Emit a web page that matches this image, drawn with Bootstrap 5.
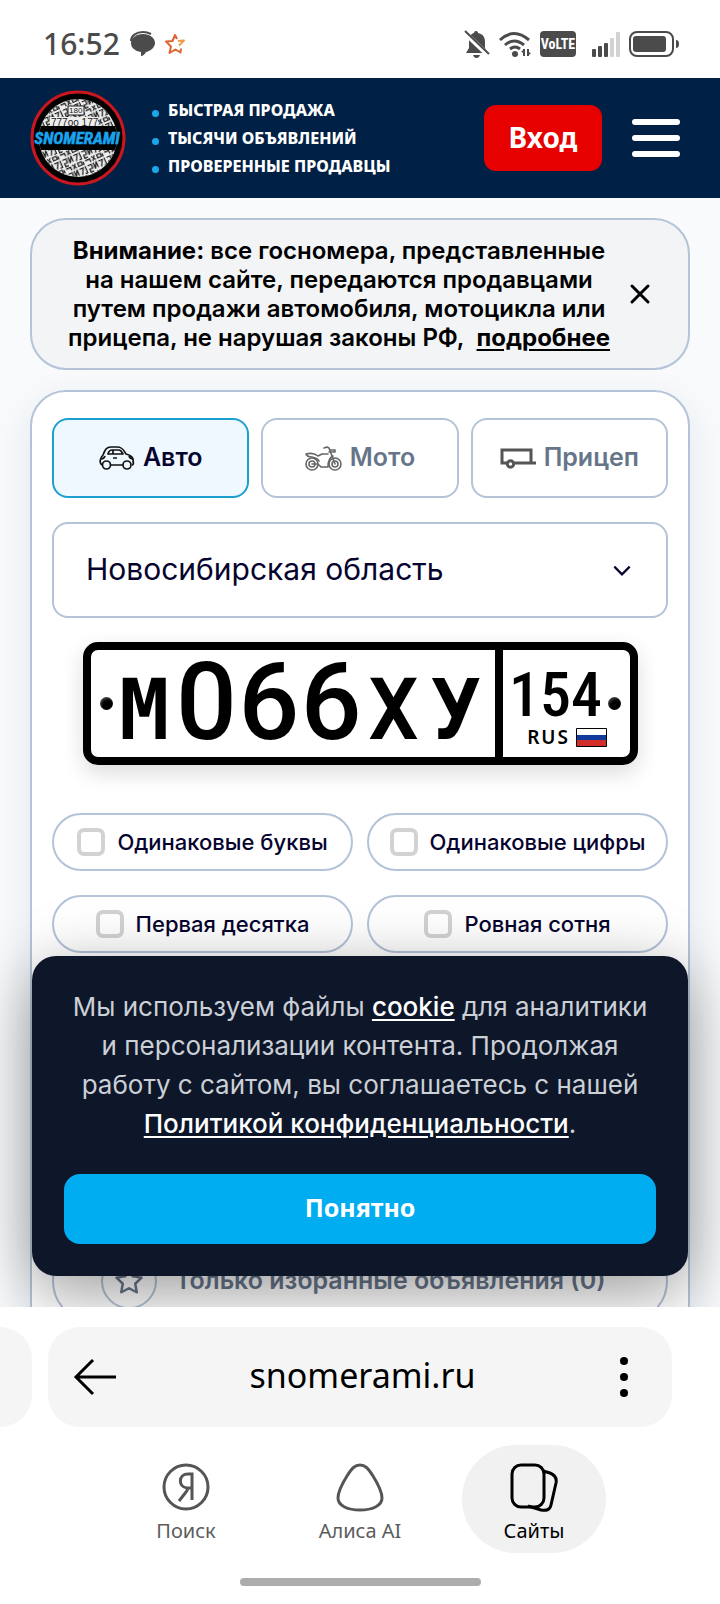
<!DOCTYPE html>
<html lang="ru">
<head>
<meta charset="utf-8">
<meta name="viewport" content="width=device-width, initial-scale=1">
<title>snomerami.ru</title>
<link href="https://cdn.jsdelivr.net/npm/bootstrap@5.3.0/dist/css/bootstrap.min.css" rel="stylesheet">
<style>
  :root { --line: #b4c3d8; --ink: #06042e; --slate: #67758a; }
  body { font-family: Inter, "Noto Sans", sans-serif; background: #fff; color: #000; overflow: hidden; }
  svg { display: block; flex: none; }
  .status-bar { height: 78px; padding: 10px 41px 0 43px; color: #4b4b4b; }
  .clock { font: 500 30px/40px "Noto Sans", sans-serif; }
  .site-head { background: #002145; height: 120px; padding: 0 40px 0 30px; }
  .perks { font: 800 16px/28px "Noto Sans", sans-serif; color: #fff; margin-left: 26px; }
  .perks li { display: flex; align-items: center; gap: 9px; white-space: nowrap; }
  .perks li::before { content: ""; width: 7px; height: 7px; border-radius: 50%; background: #1ba8ea; margin-top: 6px; }
  .btn-login { background: #e60000; color: #fff; font: 700 28px/40px "Noto Sans", sans-serif; width: 118px; height: 66px; padding: 0 0 2px; border: 0; border-radius: 12px; }
  .burger { width: 48px; height: 38px; margin-left: 30px; }
  .burger span { height: 6px; border-radius: 3px; background: #fff; }
  .screen { background: #f8fafc; min-height: 0; }
  .stack { padding: 20px 30px 0; gap: 20px; }
  .notice { background: #f3f4f6; border: 2px solid var(--line); border-radius: 36px; padding: 16px 36px; font-size: 24px; line-height: 29px; font-weight: 600; }
  .notice b { font-weight: 700; }
  .notice a { color: #000; font-weight: 700; text-underline-offset: 3px; }
  .panel { background: #fff; border: 2px solid var(--line); border-radius: 36px; padding: 26px 20px; box-shadow: 0 12px 40px rgba(30,50,80,.09); }
  .tabs-row { gap: 12px; }
  .tab-btn { height: 80px; padding: 0; border: 2px solid var(--line); border-radius: 16px; font-size: 25px; font-weight: 600; color: var(--slate); background: #fff; }
  .tab-btn.active { background: #eff8ff; border-color: #1d9fd0; color: var(--ink); }
  .region { height: 96px; border: 2px solid var(--line); border-radius: 16px; padding: 0 32px 2px; font-size: 30px; color: var(--ink); background-color: #fff;
    background-image: url("data:image/svg+xml,%3Csvg xmlns='http://www.w3.org/2000/svg' viewBox='0 0 16 10' fill='none' stroke='%2306042e' stroke-width='2'%3E%3Cpath d='M1 1.500 8 8.500 15 1.500'/%3E%3C/svg%3E"); background-size: 18px 11px; background-position: right 35px center; }
  .plate { margin: 24px 30px 0 31px; height: 123px; border: 8px solid #000; border-radius: 15px; background: #fff; box-shadow: 0 8px 22px rgba(0,0,0,.14); font-family: Roboto, sans-serif; }
  .plate input { border: 0; padding: 0; background: none; text-align: center; font-weight: 500; color: #000; min-width: 0; outline: 0; height: 107px; }
  .chars { padding: 0 8px 0 22px; }
  .chars input { width: 0; flex: 1; font-size: 107px; }
  .chars .letter { font-family: "DejaVu Sans Mono", monospace; font-weight: 700; font-size: 83px; padding-top: 15px; }
  .plate-code { width: 135px; border-left: 8px solid #000; padding: 12px 5px 6px 6px; }
  .plate .code-box { width: 92px; height: 64px; font-family: "Roboto Condensed", Roboto, sans-serif; font-size: 62px; }
  .rus { font: 600 19px/22px "Noto Sans", sans-serif; letter-spacing: 2px; }
  .rus-row { gap: 6px; padding-right: 18px; }
  .bolt { width: 13px; height: 13px; border-radius: 50%; background: radial-gradient(circle at 60% 65%, #000 40%, #777); }
  .bolt-left { left: 9px; top: 47px; }
  .bolt-right { right: 9px; top: 47px; }
  .flags-grid { display: grid; grid-template-columns: 1fr 1fr; gap: 24px 14px; margin-top: 48px; }
  .pill { border: 2px solid var(--line); border-radius: 29px; height: 58px; font-size: 22px; font-weight: 500; color: var(--ink); gap: 12px; white-space: nowrap; }
  .pill .form-check-input { width: 28px; height: 28px; margin: 0; border: 4px solid #d2d2d2; border-radius: 7px; }
  .fav { margin-top: 286px; height: 84px; border: 2px solid var(--line); border-radius: 42px; font-size: 25px; font-weight: 600; color: var(--slate); background: #fff; padding: 0 0 0 47px; gap: 18px; }
  .fav-star { width: 56px; height: 56px; border: 2px solid var(--line); border-radius: 50%; }
  .cookie { left: 32px; right: 32px; bottom: 31px; background: #0e172a; border-radius: 24px; padding: 31px 32px 32px; color: #cbcfd6; font-size: 26px; line-height: 39px; box-shadow: 0 16px 64px rgba(0,0,0,.4); }
  .cookie a { color: #fff; font-weight: 500; text-underline-offset: 3px; }
  .btn-ok { background: #00adf0; color: #fff; font: 700 25px/36px "Noto Sans", sans-serif; height: 70px; padding: 0 0 4px; border: 0; border-radius: 16px; margin-top: 31px; }
  .browser { background: #fff; padding-top: 20px; font-family: "Noto Sans", sans-serif; }
  .tab-prev { width: 32px; height: 100px; background: #f5f5f5; border-radius: 0 32px 32px 0; }
  .address { height: 100px; background: #f5f5f5; border-radius: 32px; margin: 0 48px 0 16px; padding: 0 40px 0 25px; font-size: 34px; }
  .address span { padding: 0 8px 4px 0; }
  .dock { padding: 18px 114px 0; }
  .dock a { width: 144px; height: 108px; border-radius: 54px; padding-top: 17px; gap: 5px; font-size: 20px; line-height: 28px; color: #5c5c5c; text-decoration: none; }
  .dock a.current { background: #f1f1f1; color: #000; }
  .home-bar { width: 241px; height: 8px; border-radius: 4px; background: #acacac; margin: 25px auto 18px; }
</style>
</head>
<body class="d-flex flex-column vh-100">

<div class="status-bar flex-shrink-0 d-flex align-items-center justify-content-between">
  <div class="d-flex align-items-center gap-2">
    <span class="clock">16:52</span>
    <svg width="28" height="26" viewBox="0 0 28 26"><path d="M3 10C3 5 8 1 15 1c4 0 6 1 8 2" fill="none" stroke="#4b4b4b" stroke-width="2"/><path d="M15 3c7 0 12 4 12 9 0 4-4 8-9 9-1 2-3 4-5 4v-4C7 20 3 17 3 12s5-9 12-9z" fill="#4b4b4b"/></svg>
    <svg width="22" height="22" viewBox="0 0 22 22" fill="none" stroke="#df6330" stroke-width="2" stroke-linejoin="round"><path d="M13 6 11 2 8.500 8 2 8.500l5 5L5.500 20l6-3.500 5 3 .5-4"/><path d="m14 8 6-.5-5 5" stroke="#f09a45"/></svg>
  </div>
  <div class="d-flex align-items-center">
    <svg width="26" height="28" viewBox="0 0 26 28"><path d="M12 1c2 0 2 2 2 2 5 1 7 4 7 9v6l3 5H2l3-5v-6c0-5 1-8 5-9 0 0 0-2 2-2zM9 25h7q-1 3-3.500 3T9 25z" fill="#4b4b4b"/><path d="m1 3 22 21" stroke="#fff" stroke-width="5"/><path d="m1 1 24 23" stroke="#4b4b4b" stroke-width="2"/></svg>
    <svg class="ms-2" width="34" height="27" viewBox="0 0 34 27" fill="none" stroke="#4b4b4b" stroke-width="3"><path d="M2 9q14-13 29 0M7 14q9-8 19 0M12 18q5-4 10 0"/><circle cx="17" cy="23" r="3" fill="#4b4b4b" stroke="none"/><path d="M26 18v7m4-7v7" stroke-width="2"/><path d="m23 21 3-3v4zM33 22l-3 3v-4z" fill="#4b4b4b" stroke="none"/></svg>
    <svg class="ms-2" width="36" height="26" viewBox="0 0 36 26"><rect width="36" height="26" rx="4" fill="#4b4b4b"/><text x="18" y="18" text-anchor="middle" font-family="Roboto Condensed, Roboto, sans-serif" font-weight="700" font-size="14" fill="#fff">VoLTE</text></svg>
    <svg class="ms-3" width="28" height="26" viewBox="0 0 28 26" fill="#4b4b4b"><rect y="18" width="4" height="8" rx="1"/><rect x="6" y="15" width="4" height="11" rx="1"/><rect x="12" y="12" width="4" height="14" rx="1"/><rect x="18" y="7" width="4" height="19" rx="1" fill="#d2d2d2"/><rect x="24" y="1" width="4" height="25" rx="1" fill="#d2d2d2"/></svg>
    <svg class="ms-2" width="51" height="26" viewBox="0 0 51 26"><rect x="2" y="1" width="43" height="24" rx="7" fill="none" stroke="#4b4b4b" stroke-width="2"/><rect x="5" y="5" width="33" height="16" rx="3" fill="#4b4b4b"/><path d="M48 9q3 0 3 4t-3 4z" fill="#4b4b4b"/></svg>
  </div>
</div>

<header class="site-head flex-shrink-0 d-flex align-items-center">
  <a href="#" aria-label="snomerami">
    <svg width="96" height="96" viewBox="0 0 96 96">
      <defs><clipPath id="disc"><circle cx="48" cy="48" r="39"/></clipPath>
      <pattern id="plates" width="26" height="19" patternUnits="userSpaceOnUse" patternTransform="rotate(-24) scale(.8)"><path d="M1 2h5v5H2v4h4M9 1v8l4-8v8M16 2h5l-4 8M24 1v9h-3M1 14h6v4M10 12l4 6M14 12l-4 6M17 13h5v4h-5zM24 14v4" fill="none" stroke="#222" stroke-width="1.600"/></pattern></defs>
      <circle cx="48" cy="48" r="46" fill="#000" stroke="#c9161f" stroke-width="3"/>
      <g clip-path="url(#disc)"><rect width="96" height="96" fill="#eee"/><rect width="96" height="96" fill="url(#plates)"/>
      <rect x="38" y="16" width="16" height="9" fill="#eee" stroke="#222"/><rect x="20" y="27" width="48" height="9" fill="#eee"/>
      <g font-family="Liberation Sans, sans-serif" fill="#222"><text x="39" y="23" font-size="8">180</text><text x="21" y="36" font-size="10">777оо 177</text></g>
      <rect y="36" width="96" height="24" fill="#000"/></g>
      <text x="47" y="54" text-anchor="middle" font-family="Roboto Condensed, Roboto, sans-serif" font-weight="700" font-style="italic" font-size="17" fill="#19a5ee" stroke="#19a5ee" stroke-width=".5">SNOMERAMI</text>
    </svg>
  </a>
  <ul class="perks list-unstyled mb-0 flex-grow-1">
    <li>БЫСТРАЯ ПРОДАЖА</li><li>ТЫСЯЧИ ОБЪЯВЛЕНИЙ</li><li>ПРОВЕРЕННЫЕ ПРОДАВЦЫ</li>
  </ul>
  <button type="button" class="btn-login btn">Вход</button>
  <button type="button" class="burger btn border-0 p-0 d-flex flex-column justify-content-between" aria-label="Меню"><span class="w-100"></span><span class="w-100"></span><span class="w-100"></span></button>
</header>

<main class="screen position-relative overflow-hidden flex-grow-1">
  <div class="stack d-flex flex-column">
    <section class="notice d-flex align-items-center justify-content-between">
      <div class="text-center text-nowrap"><b>Внимание:</b> все госномера, представленные<br>на нашем сайте, передаются продавцами<br>путем продажи автомобиля, мотоцикла или<br>прицепа, не нарушая законы РФ,&nbsp; <a href="#">подробнее</a></div>
      <button type="button" class="btn border-0 p-0" aria-label="Закрыть"><svg width="24" height="24" viewBox="0 0 24 24" stroke="#000" stroke-width="3" stroke-linecap="round"><path d="m4 4 16 16M20 4 4 20"/></svg></button>
    </section>

    <section class="panel d-flex flex-column">
      <div class="tabs-row d-flex">
        <button type="button" class="tab-btn btn active flex-fill w-100 d-flex align-items-center justify-content-center gap-2">
          <svg width="36" height="24" viewBox="0 0 36 24" fill="none" stroke="#111" stroke-width="1.700" stroke-linejoin="round"><path d="M3 19c-3-2-2-7 1-10C6 4 7 1 12 1h6c6 0 7 4 9 7 5 1 8 4 7 8 1 1 0 3-1 3M12 19h12"/><path d="M9 8q1-4 4-4h7q2 0 4 4zM14 4v4M14 12h4M30 10q1 3 4 3M2 13q3 0 4-3"/><circle cx="7.500" cy="19" r="4"/><circle cx="28" cy="19" r="4"/></svg>Авто</button>
        <button type="button" class="tab-btn btn flex-fill w-100 d-flex align-items-center justify-content-center gap-2">
          <svg width="37" height="25" viewBox="0 0 37 25" fill="none" stroke="#666" stroke-width="1.600" stroke-linejoin="round" stroke-linecap="round"><circle cx="7" cy="18" r="6"/><circle cx="7" cy="18" r="3"/><circle cx="30" cy="18" r="6"/><circle cx="30" cy="18" r="3"/><path d="M1 8q7-2 12 2l4-2h6M1 8q1 3 6 3 5 1 7 4M7 18h6l3 3h7q0-9 5-11M19 2l3-1 2 1 6 16M24 6h6v-2h-5"/></svg>Мото</button>
        <button type="button" class="tab-btn btn flex-fill w-100 d-flex align-items-center justify-content-center gap-2">
          <svg width="36" height="24" viewBox="0 0 36 24" fill="none" stroke="#555" stroke-width="3"><path d="M7 17H2V4h29v13h5M14 17h17"/><circle cx="10.500" cy="18" r="3.200"/></svg>Прицеп</button>
      </div>

      <select class="region form-select mt-4" aria-label="Регион"><option>Новосибирская область</option></select>

      <div class="plate d-flex position-relative">
        <span class="bolt bolt-left position-absolute"></span>
        <div class="chars d-flex flex-grow-1">
          <input class="letter" value="М" maxlength="1" aria-label="Первая буква"><input value="0" maxlength="1" aria-label="Первая цифра"><input value="6" maxlength="1" aria-label="Вторая цифра"><input value="6" maxlength="1" aria-label="Третья цифра"><input class="letter" value="Х" maxlength="1" aria-label="Вторая буква"><input class="letter" value="У" maxlength="1" aria-label="Третья буква">
        </div>
        <div class="plate-code flex-shrink-0 d-flex flex-column">
          <input class="code-box" value="154" maxlength="3" aria-label="Код региона">
          <div class="rus-row d-flex align-items-center justify-content-end"><span class="rus">RUS</span>
            <svg width="31" height="19" viewBox="0 0 31 19"><rect width="31" height="19" rx="1" fill="#000"/><path d="M1 1h29v6H1z" fill="#fff"/><path d="M1 7h29v5H1z" fill="#103a9b"/><path d="M1 12h29v6H1z" fill="#d12c27"/></svg></div>
        </div>
        <span class="bolt bolt-right position-absolute"></span>
      </div>

      <div class="flags-grid">
        <label class="pill d-flex align-items-center justify-content-center"><input class="form-check-input" type="checkbox">Одинаковые буквы</label>
        <label class="pill d-flex align-items-center justify-content-center"><input class="form-check-input" type="checkbox">Одинаковые цифры</label>
        <label class="pill d-flex align-items-center justify-content-center"><input class="form-check-input" type="checkbox">Первая десятка</label>
        <label class="pill d-flex align-items-center justify-content-center"><input class="form-check-input" type="checkbox">Ровная сотня</label>
      </div>

      <button type="button" class="fav d-flex align-items-center text-nowrap"><span class="fav-star d-flex align-items-center justify-content-center"><svg width="30" height="30" viewBox="0 0 24 24" fill="none" stroke="#67758a" stroke-width="2" stroke-linejoin="round"><path d="m12 2 3.100 6.300 6.900 1-5 4.900 1.200 6.800-6.200-3.200L5.800 21 7 14.200 2 9.300l6.900-1z"/></svg></span>Только избранные объявления (0)</button>
    </section>
  </div>

  <aside class="cookie position-absolute text-center">
    <p class="mb-0 text-nowrap">Мы используем файлы <a href="#">cookie</a> для аналитики<br>и персонализации контента. Продолжая<br>работу с сайтом, вы соглашаетесь с нашей<br><a href="#">Политикой конфиденциальности</a>.</p>
    <button type="button" class="btn-ok btn w-100">Понятно</button>
  </aside>
</main>

<footer class="browser flex-shrink-0">
  <div class="d-flex">
    <div class="tab-prev"></div>
    <div class="address flex-grow-1 d-flex align-items-center justify-content-between">
      <button type="button" class="btn border-0 p-0" aria-label="Назад"><svg width="44" height="38" viewBox="0 0 44 38" fill="none" stroke="#000" stroke-width="3"><path d="M20 2 3 19l17 17M3 19h40"/></svg></button>
      <span>snomerami.ru</span>
      <button type="button" class="btn border-0 p-0" aria-label="Ещё"><svg width="16" height="42" viewBox="0 0 16 42"><circle cx="8" cy="5" r="4"/><circle cx="8" cy="21" r="4"/><circle cx="8" cy="37" r="4"/></svg></button>
    </div>
  </div>
  <nav class="dock d-flex justify-content-between">
    <a href="#" class="d-flex flex-column align-items-center"><svg width="50" height="50" viewBox="0 0 50 50" fill="none" stroke="#555" stroke-width="3"><circle cx="25" cy="25" r="22"/><path d="M31 38V12h-4c-10 0-10 13-1 14h5M26 26q1 2-1 4l-7 9"/></svg>Поиск</a>
    <a href="#" class="d-flex flex-column align-items-center"><svg width="50" height="50" viewBox="0 0 50 50" fill="none" stroke="#555" stroke-width="3"><path d="M25 3c-5 0-8 3-13 11C7 22 3 31 3 36c0 8 10 12 22 12s22-4 22-12c0-5-4-14-9-22S30 3 25 3z"/></svg>Алиса AI</a>
    <a href="#" class="current d-flex flex-column align-items-center"><svg width="50" height="50" viewBox="0 0 50 50" fill="none" stroke="#000" stroke-width="3"><rect x="3" y="3" width="32" height="42" rx="9"/><path d="m34 9 7 2c5 2 7 5 6 10l-5 22c-1 5-5 6-10 5l-13-4"/></svg>Сайты</a>
  </nav>
  <div class="home-bar"></div>
</footer>

<script src="https://cdn.jsdelivr.net/npm/bootstrap@5.3.0/dist/js/bootstrap.bundle.min.js"></script>
</body>
</html>
